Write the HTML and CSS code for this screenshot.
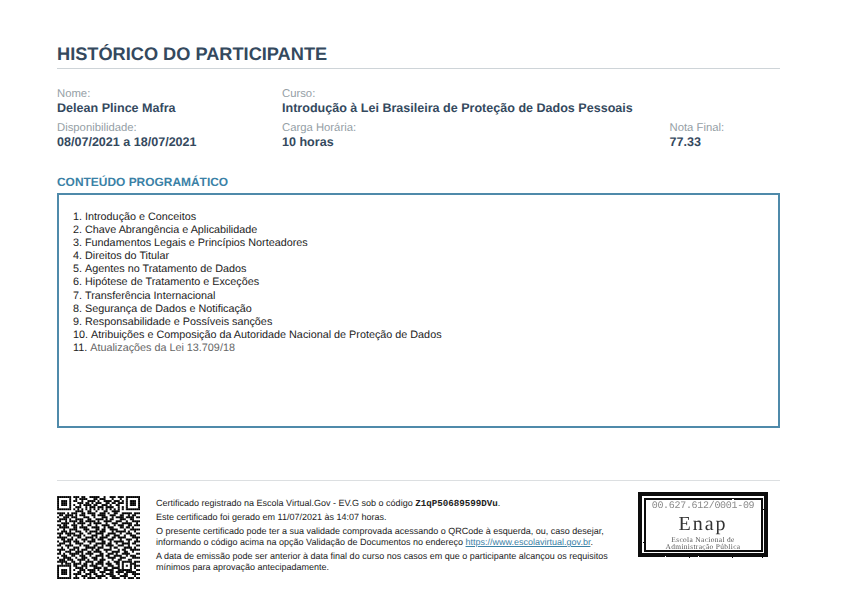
FILE: index.html
```html
<!DOCTYPE html>
<html lang="pt-BR">
<head>
<meta charset="utf-8">
<title>Histórico do Participante</title>
<link rel="stylesheet" href="styles.css">
</head>
<body>
<main class="page">
  <h1 class="title">HISTÓRICO DO PARTICIPANTE</h1>
  <section class="info">
    <div class="field"><div class="label">Nome:</div><div class="value">Delean Plince Mafra</div></div>
    <div class="field"><div class="label">Curso:</div><div class="value">Introdução à Lei Brasileira de Proteção de Dados Pessoais</div></div>
    <div></div>
    <div class="field"><div class="label">Disponibilidade:</div><div class="value">08/07/2021 a 18/07/2021</div></div>
    <div class="field"><div class="label">Carga Horária:</div><div class="value">10 horas</div></div>
    <div class="field"><div class="label">Nota Final:</div><div class="value">77.33</div></div>
  </section>
  <h2 class="section-title">CONTEÚDO PROGRAMÁTICO</h2>
  <section class="content">
    <ol class="topics">
      <li>Introdução e Conceitos</li>
      <li>Chave Abrangência e Aplicabilidade</li>
      <li>Fundamentos Legais e Princípios Norteadores</li>
      <li>Direitos do Titular</li>
      <li>Agentes no Tratamento de Dados</li>
      <li>Hipótese de Tratamento e Exceções</li>
      <li>Transferência Internacional</li>
      <li>Segurança de Dados e Notificação</li>
      <li>Responsabilidade e Possíveis sanções</li>
      <li>Atribuições e Composição da Autoridade Nacional de Proteção de Dados</li>
      <li><span class="muted">Atualizações da Lei 13.709/18</span></li>
    </ol>
  </section>
  <footer class="footer">
    <svg class="qr" viewBox="0 0 41 41" aria-label="QR Code">
      <defs>
        <pattern id="seams" width="1" height="1" patternUnits="userSpaceOnUse">
          <path d="M0 0h1v.12h-1zM0 0h.12v1h-.12z" fill="#fff" fill-opacity=".45"/>
        </pattern>
        <filter id="rough" x="-5%" y="-5%" width="110%" height="110%">
          <feTurbulence type="fractalNoise" baseFrequency=".3" numOctaves="2" seed="4"/>
          <feDisplacementMap in="SourceGraphic" scale="1.6" xChannelSelector="R" yChannelSelector="G"/>
          <feGaussianBlur stdDeviation=".3"/>
        </filter>
      </defs>
      <path fill="#000" fill-rule="evenodd" d="M0 0h7v7h-7zM1 1v5h5v-5zM2 2h3v3h-3zM34 0h7v7h-7zM35 1v5h5v-5zM36 2h3v3h-3zM0 34h7v7h-7zM1 35v5h5v-5zM2 36h3v3h-3zM32 32h5v5h-5zM33 33v3h3v-3zM34 34h1v1h-1z"/>
      <path fill="#000" d="M8 0h3v1h-3zM12 0h2v1h-2zM16 0h5v1h-5zM23 0h1v1h-1zM26 0h3v1h-3zM30 0h3v1h-3zM9 1h1v1h-1zM11 1h4v1h-4zM18 1h2v1h-2zM21 1h3v1h-3zM27 1h1v1h-1zM31 1h1v1h-1zM8 2h2v1h-2zM12 2h1v1h-1zM15 2h4v1h-4zM20 2h1v1h-1zM23 2h4v1h-4zM28 2h3v1h-3zM32 2h1v1h-1zM10 3h3v1h-3zM14 3h2v1h-2zM17 3h1v1h-1zM19 3h3v1h-3zM24 3h2v1h-2zM27 3h2v1h-2zM30 3h3v1h-3zM8 4h1v1h-1zM11 4h1v1h-1zM13 4h4v1h-4zM18 4h2v1h-2zM22 4h3v1h-3zM26 4h1v1h-1zM29 4h2v1h-2zM9 5h3v1h-3zM14 5h1v1h-1zM16 5h3v1h-3zM20 5h3v1h-3zM24 5h4v1h-4zM30 5h1v1h-1zM32 5h1v1h-1zM8 6h1v1h-1zM10 6h1v1h-1zM12 6h1v1h-1zM14 6h1v1h-1zM16 6h1v1h-1zM18 6h1v1h-1zM20 6h1v1h-1zM22 6h1v1h-1zM24 6h1v1h-1zM26 6h1v1h-1zM28 6h1v1h-1zM30 6h1v1h-1zM32 6h1v1h-1zM9 7h4v1h-4zM15 7h2v1h-2zM19 7h1v1h-1zM23 7h2v1h-2zM27 7h4v1h-4zM0 8h4v1h-4zM5 8h1v1h-1zM7 8h3v1h-3zM12 8h2v1h-2zM15 8h4v1h-4zM21 8h3v1h-3zM25 8h1v1h-1zM28 8h2v1h-2zM32 8h5v1h-5zM38 8h3v1h-3zM1 9h2v1h-2zM4 9h4v1h-4zM9 9h1v1h-1zM11 9h3v1h-3zM17 9h2v1h-2zM20 9h4v1h-4zM26 9h3v1h-3zM31 9h2v1h-2zM35 9h1v1h-1zM37 9h2v1h-2zM0 10h1v1h-1zM3 10h3v1h-3zM7 10h3v1h-3zM13 10h3v1h-3zM18 10h1v1h-1zM22 10h3v1h-3zM27 10h1v1h-1zM29 10h4v1h-4zM34 10h4v1h-4zM39 10h2v1h-2zM1 11h4v1h-4zM6 11h1v1h-1zM9 11h4v1h-4zM15 11h2v1h-2zM19 11h4v1h-4zM24 11h1v1h-1zM26 11h2v1h-2zM31 11h3v1h-3zM36 11h2v1h-2zM0 12h2v1h-2zM4 12h1v1h-1zM6 12h4v1h-4zM11 12h2v1h-2zM14 12h5v1h-5zM20 12h1v1h-1zM23 12h4v1h-4zM29 12h3v1h-3zM34 12h1v1h-1zM37 12h4v1h-4zM2 13h4v1h-4zM8 13h1v1h-1zM10 13h4v1h-4zM16 13h1v1h-1zM18 13h4v1h-4zM24 13h1v1h-1zM27 13h3v1h-3zM32 13h5v1h-5zM39 13h1v1h-1zM0 14h2v1h-2zM3 14h2v1h-2zM7 14h3v1h-3zM12 14h1v1h-1zM15 14h2v1h-2zM19 14h1v1h-1zM22 14h4v1h-4zM28 14h1v1h-1zM30 14h3v1h-3zM35 14h2v1h-2zM38 14h3v1h-3zM1 15h5v1h-5zM8 15h2v1h-2zM11 15h4v1h-4zM17 15h4v1h-4zM23 15h1v1h-1zM25 15h3v1h-3zM31 15h2v1h-2zM34 15h2v1h-2zM37 15h1v1h-1zM0 16h1v1h-1zM3 16h1v1h-1zM6 16h4v1h-4zM13 16h3v1h-3zM19 16h2v1h-2zM22 16h2v1h-2zM26 16h4v1h-4zM33 16h1v1h-1zM36 16h5v1h-5zM2 17h3v1h-3zM6 17h1v1h-1zM9 17h3v1h-3zM14 17h1v1h-1zM16 17h4v1h-4zM21 17h3v1h-3zM27 17h1v1h-1zM29 17h5v1h-5zM35 17h1v1h-1zM38 17h1v1h-1zM0 18h3v1h-3zM4 18h5v1h-5zM11 18h2v1h-2zM15 18h2v1h-2zM19 18h4v1h-4zM25 18h4v1h-4zM31 18h1v1h-1zM34 18h3v1h-3zM39 18h2v1h-2zM1 19h1v1h-1zM5 19h2v1h-2zM8 19h4v1h-4zM13 19h1v1h-1zM17 19h3v1h-3zM22 19h1v1h-1zM24 19h2v1h-2zM28 19h3v1h-3zM33 19h1v1h-1zM36 19h3v1h-3zM0 20h5v1h-5zM7 20h1v1h-1zM10 20h2v1h-2zM14 20h4v1h-4zM19 20h1v1h-1zM21 20h4v1h-4zM27 20h2v1h-2zM30 20h4v1h-4zM37 20h4v1h-4zM2 21h2v1h-2zM5 21h3v1h-3zM9 21h1v1h-1zM12 21h3v1h-3zM17 21h2v1h-2zM20 21h3v1h-3zM25 21h3v1h-3zM31 21h1v1h-1zM34 21h3v1h-3zM39 21h1v1h-1zM0 22h1v1h-1zM3 22h4v1h-4zM8 22h3v1h-3zM13 22h1v1h-1zM15 22h4v1h-4zM22 22h2v1h-2zM26 22h1v1h-1zM28 22h5v1h-5zM35 22h1v1h-1zM38 22h3v1h-3zM1 23h3v1h-3zM6 23h1v1h-1zM9 23h4v1h-4zM16 23h1v1h-1zM19 23h5v1h-5zM25 23h2v1h-2zM29 23h1v1h-1zM32 23h4v1h-4zM37 23h2v1h-2zM0 24h2v1h-2zM4 24h4v1h-4zM11 24h1v1h-1zM13 24h3v1h-3zM18 24h2v1h-2zM22 24h1v1h-1zM24 24h4v1h-4zM30 24h3v1h-3zM35 24h1v1h-1zM39 24h2v1h-2zM2 25h1v1h-1zM5 25h1v1h-1zM8 25h3v1h-3zM14 25h5v1h-5zM20 25h3v1h-3zM26 25h1v1h-1zM28 25h2v1h-2zM33 25h4v1h-4zM38 25h1v1h-1zM0 26h4v1h-4zM6 26h3v1h-3zM10 26h1v1h-1zM12 26h3v1h-3zM17 26h1v1h-1zM19 26h2v1h-2zM23 26h4v1h-4zM30 26h1v1h-1zM32 26h2v1h-2zM36 26h5v1h-5zM1 27h1v1h-1zM4 27h3v1h-3zM9 27h4v1h-4zM15 27h2v1h-2zM18 27h4v1h-4zM24 27h1v1h-1zM27 27h4v1h-4zM33 27h2v1h-2zM37 27h1v1h-1zM0 28h2v1h-2zM3 28h1v1h-1zM6 28h5v1h-5zM12 28h1v1h-1zM14 28h4v1h-4zM21 28h2v1h-2zM25 28h3v1h-3zM29 28h1v1h-1zM32 28h4v1h-4zM39 28h2v1h-2zM2 29h3v1h-3zM7 29h2v1h-2zM11 29h3v1h-3zM16 29h1v1h-1zM19 29h4v1h-4zM24 29h2v1h-2zM28 29h4v1h-4zM34 29h1v1h-1zM36 29h3v1h-3zM0 30h1v1h-1zM3 30h4v1h-4zM9 30h1v1h-1zM12 30h3v1h-3zM17 30h3v1h-3zM22 30h1v1h-1zM25 30h4v1h-4zM31 30h3v1h-3zM37 30h4v1h-4zM1 31h3v1h-3zM5 31h3v1h-3zM10 31h4v1h-4zM15 31h1v1h-1zM18 31h2v1h-2zM21 31h3v1h-3zM27 31h1v1h-1zM30 31h2v1h-2zM35 31h2v1h-2zM0 32h5v1h-5zM7 32h2v1h-2zM11 32h1v1h-1zM14 32h4v1h-4zM20 32h3v1h-3zM25 32h1v1h-1zM28 32h3v1h-3zM38 32h3v1h-3zM2 33h1v1h-1zM4 33h3v1h-3zM8 33h4v1h-4zM13 33h2v1h-2zM17 33h1v1h-1zM19 33h4v1h-4zM24 33h3v1h-3zM29 33h2v1h-2zM37 33h2v1h-2zM8 34h2v1h-2zM12 34h3v1h-3zM16 34h4v1h-4zM22 34h1v1h-1zM25 34h3v1h-3zM30 34h1v1h-1zM38 34h3v1h-3zM9 35h4v1h-4zM14 35h1v1h-1zM18 35h4v1h-4zM23 35h2v1h-2zM27 35h4v1h-4zM38 35h1v1h-1zM8 36h1v1h-1zM11 36h3v1h-3zM15 36h4v1h-4zM20 36h1v1h-1zM23 36h5v1h-5zM30 36h2v1h-2zM39 36h2v1h-2zM10 37h2v1h-2zM13 37h1v1h-1zM16 37h3v1h-3zM21 37h3v1h-3zM26 37h2v1h-2zM29 37h4v1h-4zM34 37h5v1h-5zM8 38h4v1h-4zM14 38h3v1h-3zM18 38h2v1h-2zM22 38h1v1h-1zM24 38h4v1h-4zM30 38h1v1h-1zM33 38h2v1h-2zM37 38h4v1h-4zM9 39h1v1h-1zM12 39h3v1h-3zM16 39h1v1h-1zM19 39h5v1h-5zM26 39h3v1h-3zM31 39h4v1h-4zM38 39h1v1h-1zM8 40h3v1h-3zM13 40h1v1h-1zM15 40h4v1h-4zM20 40h2v1h-2zM24 40h1v1h-1zM27 40h4v1h-4zM33 40h1v1h-1zM35 40h3v1h-3zM39 40h2v1h-2z"/>
      <rect width="41" height="41" fill="url(#seams)"/>
    </svg>
    <div class="notes">
      <p>Certificado registrado na Escola Virtual.Gov - EV.G sob o código <b class="code">Z1qP50689599DVu</b>.</p>
      <p>Este certificado foi gerado em 11/07/2021 às 14:07 horas.</p>
      <p>O presente certificado pode ter a sua validade comprovada acessando o QRCode à esquerda, ou, caso desejar, informando o código acima na opção Validação de Documentos no endereço <a href="#">https://www.escolavirtual.gov.br</a>.</p>
      <p>A data de emissão pode ser anterior à data final do curso nos casos em que o participante alcançou os requisitos mínimos para aprovação antecipadamente.</p>
    </div>
    <div class="stamp">
      <div class="stamp-frame"></div>
      <div class="stamp-text">
        <div class="stamp-id">00.627.612/0001-09</div>
        <div class="stamp-name">Enap</div>
        <div class="stamp-org">Escola Nacional de<br>Administração Pública</div>
      </div>
    </div>
  </footer>
</main>
</body>
</html>
```
FILE: styles.css
```css
html, body { margin: 0; padding: 0; background: #fff; }
body { font-family: "Liberation Sans", Arial, sans-serif; text-rendering: geometricPrecision; }
.page { width: 723px; height: 596px; box-sizing: border-box; margin-left: 57px; padding-top: 44px; }
.title { margin: 0; height: 24px; border-bottom: 1px solid #ced4d8; font-size: 18.2px; line-height: 20px; font-weight: 700; color: #34495e; }
.info { display: grid; grid-template-columns: 225px 387.5px 1fr; row-gap: 5px; margin-top: 18px; }
.label { font-size: 11.3px; line-height: 14px; color: #95a0a6; }
.value { font-size: 12.55px; line-height: 15px; font-weight: 700; color: #34495e; }
.section-title { margin: 25px 0 0; font-size: 11.95px; line-height: 14px; font-weight: 700; color: #3a81a6; }
.content { box-sizing: border-box; height: 235px; margin-top: 4px; border: 2px solid #4f8aaa; padding-top: 16px; }
.topics { margin: 0; padding: 0 0 0 14px; list-style-position: inside; font-size: 10.8px; line-height: 13.1px; color: #222; }
.muted { color: #666; }
.footer { display: flex; align-items: flex-start; margin-top: 52px; border-top: 1px solid #dcdfe1; padding-top: 15px; }
.qr { width: 83px; height: 83px; flex: none; }
.notes { width: 460px; margin-left: 16px; padding-top: 2px; font-size: 9px; line-height: 11px; color: #222; }
.notes p { margin: 0 0 3px; }
.code { font-family: "Liberation Mono", monospace; font-weight: 700; font-size: 9.2px; line-height: 0; }
.notes a { color: #3a81a6; text-decoration: underline; }
.stamp { position: relative; flex: none; width: 130px; height: 65px; margin-left: 22px; margin-top: -4px; }
.stamp-frame { position: absolute; inset: 0; box-sizing: border-box; border: 4px solid #111; padding: 1.5px; filter: url(#rough); }
.stamp-frame::before { content: ""; display: block; box-sizing: border-box; height: 100%; border: 2.5px solid #111; }
.stamp-text { position: absolute; inset: 9px 0 0; text-align: center; font-family: "Liberation Mono", monospace; filter: blur(.35px); }
.stamp-id { font-size: 10px; line-height: 12px; color: #8a8a8a; letter-spacing: -.3px; }
.stamp-name { font-family: "Liberation Serif", serif; font-size: 20px; line-height: 20px; letter-spacing: 2px; color: #333; margin-top: 1px; }
.stamp-org { font-family: "Liberation Serif", serif; font-size: 7.4px; line-height: 7px; letter-spacing: .35px; color: #555; margin-top: 2px; }
```
